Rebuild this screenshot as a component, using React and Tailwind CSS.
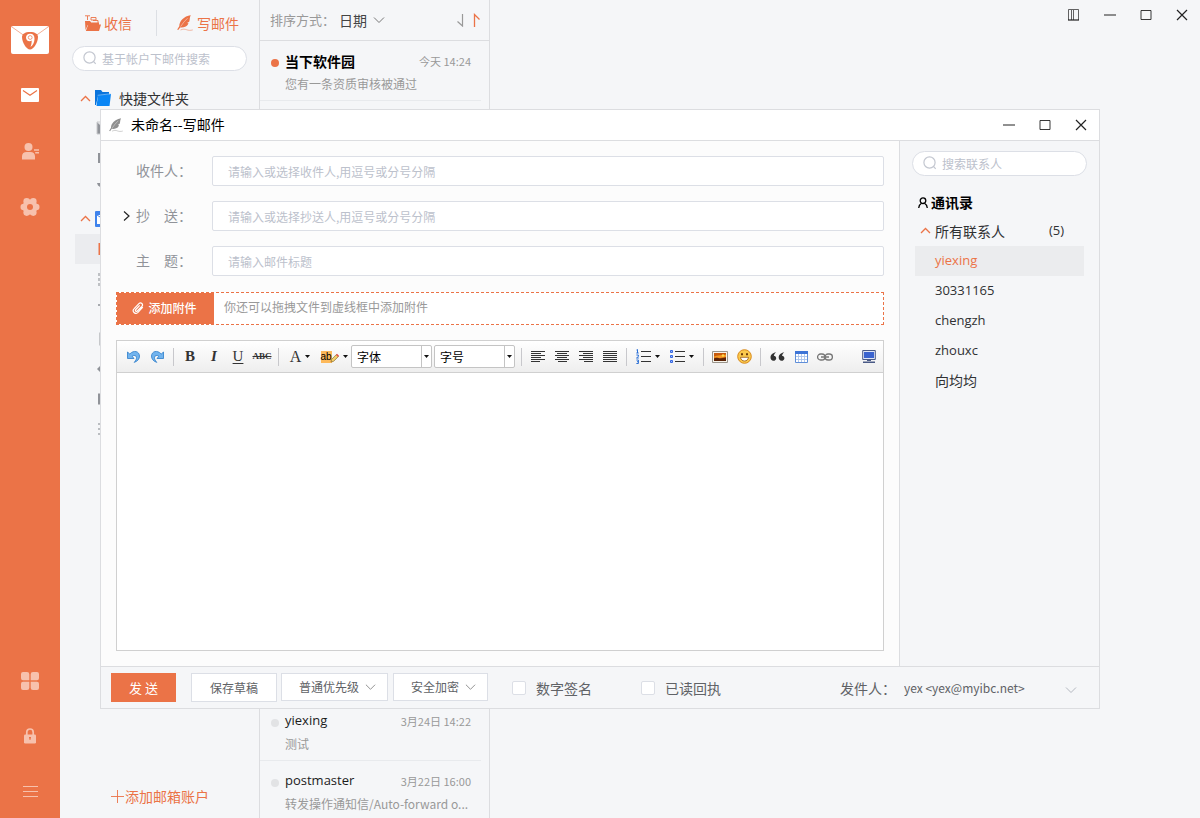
import { useState } from 'react';

const CONTACTS = ['yiexing', '30331165', 'chengzh', 'zhouxc', '向均均'];

const OLDER_MAIL = [
  { from: 'yiexing', time: '3月24日 14:22', text: '测试' },
  { from: 'postmaster', time: '3月22日 16:00', text: '转发操作通知信/Auto-forward o...' },
];

/* ---------- small shared icons ---------- */

function Chevron({ className, d = 'M1 1.5 6 6.5 11 1.5' }) {
  return (
    <svg viewBox="0 0 12 8" className={className} fill="none" stroke="currentColor">
      <path d={d} />
    </svg>
  );
}

function UpChevron() {
  return (
    <svg viewBox="0 0 11 7" className="h-[7px] w-[11px] shrink-0 text-[#eb7347]" fill="none" stroke="currentColor" strokeWidth="1.3">
      <path d="M1 6 5.5 1.5 10 6" />
    </svg>
  );
}

function Caret() {
  return (
    <svg viewBox="0 0 5 3" className="h-[3px] w-[5px] shrink-0" fill="#111">
      <path d="M0 0h5L2.5 3z" />
    </svg>
  );
}

function Feather({ className }) {
  return (
    <svg viewBox="0 0 16 16" className={className} fill="currentColor">
      <path d="M13.8.2C9.500.6 5.200 3.300 3.200 7.200 2.500 8.600 2.200 10 2.300 11.200L.2 14.600l1 .5 2-2.700c3.300.4 6-.5 7.400-2.400l.9-1.800-1.500-.2 2.200-1.300c.5-1.300.5-2.300.6-3.200C12.900 2.300 13.200 1.200 13.800.2z" />
      <path d="M3.600 11.600C5.500 8.500 7.800 5.700 10.600 3.200" stroke="#fff" strokeWidth=".6" fill="none" opacity=".7" />
      <path d="M3.500 15c2.500-1.100 4.300-1 6-.3 1.800.7 3.900.9 6.300.2" fill="none" stroke="currentColor" strokeWidth=".8" opacity=".6" />
    </svg>
  );
}

function SearchIcon() {
  return (
    <svg viewBox="0 0 15 15" className="h-[15px] w-[15px] shrink-0 text-[#c3c7d0]" fill="none" stroke="currentColor" strokeWidth="1.2">
      <circle cx="6.500" cy="6.500" r="5.600" />
      <path d="m10.700 10.700 2 2.200" />
    </svg>
  );
}

function SearchBox({ placeholder }) {
  return (
    <label className="flex h-[25px] items-center gap-1 rounded-full border border-[#dcdfe6] bg-white pl-[10px]">
      <SearchIcon />
      <input
        type="text"
        aria-label={placeholder}
        placeholder={placeholder}
        className="min-w-0 flex-1 bg-transparent text-xs outline-none placeholder:text-[#bcc1cc]"
      />
    </label>
  );
}

function WindowButtons({ layout }) {
  return (
    <div className="flex h-[30px] text-[#222]">
      {layout && (
        <button className="flex w-9 items-center justify-center">
          <svg viewBox="0 0 12 12" className="h-3 w-3" fill="none" stroke="currentColor">
            <path d="M.5 11V.5h10V11M3.500 1v10M5.500 1v10" strokeWidth=".7" />
            <path d="M0 11h11" strokeWidth="1.2" />
          </svg>
        </button>
      )}
      <button className="flex w-9 items-center justify-center">
        <svg viewBox="0 0 12 12" className="h-3 w-3" stroke="currentColor"><path d="M0 6h12" /></svg>
      </button>
      <button className="flex w-9 items-center justify-center">
        <svg viewBox="0 0 12 12" className="h-3 w-3" fill="none" stroke="currentColor"><path d="M1 1.5h10v9H1z" strokeWidth=".9" /></svg>
      </button>
      <button className="flex w-9 items-center justify-center">
        <svg viewBox="0 0 12 12" className="h-3 w-3" stroke="currentColor"><path d="m1 1 10 10M11 1 1 11" strokeWidth="1.2" /></svg>
      </button>
    </div>
  );
}

/* ---------- left rail ---------- */

function Rail() {
  return (
    <nav className="flex w-[60px] shrink-0 flex-col items-center bg-[#eb7347] pt-[26px] pb-[21px] text-[#f7c1ad]">
      <svg viewBox="0 0 38 28" className="h-7 w-[38px]" fill="none">
        <rect width="38" height="28" rx="2" fill="#fff" />
        <path d="M1 1 13 9.500M37 1 25 9.500" stroke="#f0997a" strokeWidth=".8" />
        <path d="M19 6c-5 0-8 2-8 5 0 5.400 4.300 12.500 8 12.500s8-7.100 8-12.500c0-3-3-5-8-5z" fill="#eb7347" />
        <path d="M19.500 21c2.600-1.800 4-5 4-8.300 0-3.300-1.500-5-4.300-5-2.500 0-4.200 1.500-4.200 3.800s1.500 3.700 3.500 3.700c.9 0 1.700-.3 2.200-.8 0 2.200-.3 4.200-1.200 6.600z" fill="#fff" />
        <circle cx="19.200" cy="11.500" r="1.900" fill="#fff" stroke="#eb7347" strokeWidth=".7" />
      </svg>
      <button className="mt-[34px]">
        <svg viewBox="0 0 18 14" className="h-[14px] w-[18px]">
          <rect width="18" height="14" rx="1" fill="#fff" />
          <path d="m2 2.500 7 4.800 7-4.800" fill="none" stroke="#eb7347" strokeWidth="1.2" />
        </svg>
      </button>
      <button className="mt-[41px]">
        <svg viewBox="0 0 18 17" className="h-[17px] w-[18px]" fill="currentColor">
          <circle cx="7.500" cy="4" r="4" />
          <path d="M1 16.500v-3.200C1 10.500 3 9 5.500 9h4C12 9 14 10.500 14 13.300v3.200zM13 6.300h5v1.500h-5zM14.200 9h3.800v1.500h-3.800z" />
        </svg>
      </button>
      <button className="mt-[37px]">
        <svg viewBox="0 0 20 20" className="h-5 w-5">
          <g fill="currentColor">
            <circle cx="10" cy="10" r="7.500" />
            <circle cx="3.800" cy="10" r="3.300" />
            <circle cx="16.200" cy="10" r="3.300" />
            <circle cx="6.700" cy="4.400" r="3.300" />
            <circle cx="13.300" cy="4.400" r="3.300" />
            <circle cx="6.700" cy="15.600" r="3.300" />
            <circle cx="13.300" cy="15.600" r="3.300" />
          </g>
          <circle cx="10" cy="10" r="3" fill="#eb7347" />
        </svg>
      </button>
      <div className="mt-auto flex flex-col items-center">
        <button>
          <svg viewBox="0 0 18 18" className="h-[18px] w-[18px]" fill="currentColor">
            <path d="M2 0h4a2.300 2.300 0 0 1 2.300 2.300v6H2A2 2 0 0 1 0 6.300V2a2 2 0 0 1 2-2zM12 0h4a2 2 0 0 1 2 2v4.300a2 2 0 0 1-2 2H9.700v-6A2.300 2.300 0 0 1 12 0zM2 9.700h6.300v6A2.300 2.300 0 0 1 6 18H2a2 2 0 0 1-2-2v-4.300a2 2 0 0 1 2-2zM9.700 9.700H16a2 2 0 0 1 2 2V16a2 2 0 0 1-2 2h-4a2.300 2.300 0 0 1-2.300-2.300z" />
          </svg>
        </button>
        <button className="mt-[38px]">
          <svg viewBox="0 0 12 16" className="h-4 w-3">
            <path d="M2.800 7V4.200a3.200 3.200 0 0 1 6.400 0V7" fill="none" stroke="currentColor" strokeWidth="1.7" />
            <rect y="6.500" width="12" height="9" rx="1.200" fill="currentColor" />
            <path d="M5 9h2v1.500h-.5V12h-1v-1.500H5z" fill="#eb7347" />
          </svg>
        </button>
        <button className="mt-[41px]">
          <svg viewBox="0 0 15 12" className="h-3 w-[15px]" stroke="currentColor">
            <path d="M0 1.500h15M0 6.500h15M0 11.500h15" />
          </svg>
        </button>
      </div>
    </nav>
  );
}

/* ---------- folder column ---------- */

// glyphs of the folder rows, each on a 16x16 box
const QUICK_ICONS = [
  <path key="all" d="M1 2h14v12H1zM1 2l7 6 7-6" fill="#909399" stroke="#c8cacd" />,
  <path key="unread" d="M2 3h12v10H2z" fill="#909399" />,
  <path key="flag" d="M1 3h14v2l-4 4v4l-4 1V9L2 5.500z" fill="#909399" />,
];

const BOX_ICONS = [
  <path key="inbox" d="M2.500 2h11v12h-11z" fill="#eb7347" />,
  <path key="draft" d="M3 2v3m0 2v3m0 2v3M6 3h8M6 8h8M6 13h8" stroke="#a7aaaf" strokeWidth="1.4" />,
  <path key="sent" d="M2 3h12v2H2zM4 6h9v8H4z" fill="#a7aaaf" />,
  <path key="trash" d="M4 2v12h9V2z" fill="none" stroke="#a7aaaf" strokeWidth="1.2" />,
  <path key="spam" d="m1 8 6-6v12z" fill="#909399" />,
  <path key="virus" d="M2 2.500h12v11H2z" fill="#909399" />,
  <path key="more" d="M2 3h3m-3 5h2m-2 5h3M7 3h7M7 8h7M7 13h7" stroke="#a7aaaf" strokeWidth="1.4" />,
];

function FolderRow({ icon, active }) {
  return (
    <li className={active ? 'ml-[3px] flex h-[30px] items-center bg-[#ebecef] pl-[21px]' : 'flex h-[30px] items-center pl-6'}>
      <svg viewBox="0 0 16 16" className="h-4 w-4" fill="none">{icon}</svg>
    </li>
  );
}

function Folders() {
  return (
    <aside className="flex w-[200px] shrink-0 flex-col border-r border-[#dcdde0]">
      <div className="mt-[10px] flex h-[26px] items-center text-sm text-[#eb7347]">
        <button className="flex h-full w-[97px] items-center gap-[3px] border-r border-[#dcdfe4] pl-6">
          <svg viewBox="0 0 17 17" className="h-[17px] w-[17px]" fill="currentColor">
            <path d="M1 6h5l1.200 1.500H15V10H3.800L1.500 15z" />
            <path d="M4.300 9.500H17L15 16H1.800z" />
            <path d="M1 .8h5M3.500 1v4M7 2.500h5v1.200M7 2.500V5h5V3.500M9 5.500h5V8" fill="none" stroke="currentColor" strokeWidth=".9" />
          </svg>
          收信
        </button>
        <button className="flex h-full flex-1 items-center gap-1 pl-5">
          <Feather className="h-4 w-4" />
          写邮件
        </button>
      </div>
      <div className="mt-[10px] px-3">
        <SearchBox placeholder="基于帐户下邮件搜索" />
      </div>
      <div className="mt-3 pl-3">
        <div className="flex h-[30px] items-center pl-2">
          <UpChevron />
          <svg viewBox="0 0 16 16" className="ml-1 h-4 w-4">
            <path d="M0 0h6l1.500 2H14v4H3L1 15H0z" fill="#0a74dc" />
            <path d="M3 5.500 16 4 14.500 16H1.500z" fill="#0a86f5" />
            <path d="M2.600 5.300 15.500 3.800" stroke="#8cc6fb" strokeWidth=".7" />
          </svg>
          <span className="ml-2 text-sm text-[#303133]">快捷文件夹</span>
        </div>
        <ul>
          {QUICK_ICONS.map((icon, i) => <FolderRow key={i} icon={icon} />)}
        </ul>
        <div className="flex h-[31px] items-center pl-2">
          <UpChevron />
          <svg viewBox="0 0 16 16" className="ml-1 h-4 w-4">
            <rect width="16" height="16" rx="1" fill="#3f83ec" />
            <path d="M2 4h12v9H2z" fill="#fff" />
            <path d="m2 4 6 4 6-4" fill="none" stroke="#3f83ec" />
          </svg>
        </div>
        <ul>
          {BOX_ICONS.map((icon, i) => <FolderRow key={i} icon={icon} active={i === 0} />)}
        </ul>
      </div>
      <button className="mt-auto mb-[10px] flex h-6 items-center gap-px pl-[51px] text-sm text-[#eb7347]">
        <svg viewBox="0 0 13 13" className="h-[13px] w-[13px]" stroke="currentColor"><path d="M0 6.500h13M6.500 0v13" strokeWidth=".9" /></svg>
        添加邮箱账户
      </button>
    </aside>
  );
}

/* ---------- message column ---------- */

function MailItem({ from, time, text, unread }) {
  return (
    <li className="mr-2 h-[60px] shrink-0 border-b border-[#e8eaed] pt-[10px] pr-[10px] pl-[11px]">
      <div className="flex h-5 items-center">
        <span className={unread ? 'mt-[3px] mr-1.5 h-2 w-2 rounded-full bg-[#eb7347]' : 'mt-[3px] mr-1.5 h-2 w-2 rounded-full bg-[#e2e3e5]'} />
        <span className={unread ? 'flex-1 text-sm font-bold text-black' : 'flex-1 font-[Open_Sans,sans-serif] text-[13px] text-[#1c1c1c]'}>{from}</span>
        <time className="text-[11px] text-[#999]">{time}</time>
      </div>
      <p className="mt-[3px] pl-[14px] text-xs leading-5 whitespace-nowrap text-[#999]">{text}</p>
    </li>
  );
}

function MailList() {
  return (
    <section className="flex w-[230px] shrink-0 flex-col overflow-hidden border-r border-[#dcdde0]">
      <header className="flex h-[41px] shrink-0 items-center border-b border-[#dcdde0] pr-2 pl-[10px] text-[13px] text-[#999]">
        排序方式：
        <button className="ml-1 flex items-center gap-1.5 text-sm text-[#444]">
          日期
          <Chevron className="h-2 w-3 text-[#777]" />
        </button>
        <svg viewBox="0 0 24 14" className="ml-auto h-[14px] w-6" fill="none">
          <path d="M5.500 1v12L.5 8.500" stroke="#999" strokeWidth="1.2" />
          <path d="M17.500 14V1.500l5 5" stroke="#eb7347" strokeWidth="1.3" />
        </svg>
      </header>
      {/* the last row runs on below the window edge */}
      <ul className="-mb-[3px] flex min-h-0 flex-1 flex-col">
        <MailItem unread from="当下软件园" time="今天 14:24" text="您有一条资质审核被通过" />
        <li className="flex-1" />
        {OLDER_MAIL.map((m) => <MailItem key={m.from} {...m} />)}
      </ul>
    </section>
  );
}

/* ---------- editor toolbar ---------- */

function Tool({ children, caret }) {
  return (
    <button type="button" className={caret ? 'flex h-6 w-[34px] items-center justify-center gap-1' : 'flex h-6 w-6 items-center justify-center'}>
      {children}
      {caret && <Caret />}
    </button>
  );
}

function Sep() {
  return <span className="mx-1 h-[18px] w-px bg-[#c8c8cc]" />;
}

function Lines({ d }) {
  return (
    <svg viewBox="0 0 14 11" className="h-[11px] w-[14px]" stroke="#333"><path d={d} /></svg>
  );
}

function UndoIcon({ flip }) {
  return (
    <svg viewBox="0 0 13 13" className={flip ? 'h-[13px] w-[13px] -scale-x-100' : 'h-[13px] w-[13px]'}>
      <path d="M.5 2v6.500H7L5.200 6.300C7 4.800 9.200 5.300 9.500 7.300c.2 1.700-.7 3.400-2.300 5.100 3.300-1.100 5.400-3.500 5.300-6.400C12.300 1.300 6.800-.4 2.800 4z" fill="#72b4ee" stroke="#2c7cc9" strokeWidth=".8" />
    </svg>
  );
}

function ToolSelect({ label }) {
  return (
    <div className="relative mr-[2px] h-[23px] w-[81px] rounded-xs border border-[#c4c4c4] bg-white">
      <select aria-label={label} className="block h-full w-full appearance-none bg-transparent pl-[5px] text-xs text-black outline-none">
        <option>{label}</option>
      </select>
      <span className="pointer-events-none absolute inset-y-0 right-0 flex w-[10px] items-center justify-center border-l border-[#c4c4c4]">
        <Caret />
      </span>
    </div>
  );
}

function Toolbar() {
  return (
    <div className="flex h-8 items-center border-b border-[#d0d0d0] bg-linear-to-b from-white to-[#eeeeee] pr-[2px] pl-1 font-[Liberation_Serif,serif] text-[#333]">
      <Tool><UndoIcon /></Tool>
      <Tool><UndoIcon flip /></Tool>
      <Sep />
      <Tool><b className="text-[15px]">B</b></Tool>
      <Tool><b className="text-[15px] italic">I</b></Tool>
      <Tool><span className="text-[15px] underline underline-offset-2">U</span></Tool>
      <Tool><span className="text-[9px] font-bold line-through">ABC</span></Tool>
      <Sep />
      <Tool caret><span className="text-base">A</span></Tool>
      <Tool caret>
        <span className="relative flex h-4 w-[18px] items-center">
          <span className="bg-[#fdb95a] font-[Liberation_Sans,sans-serif] text-[10px] leading-3 text-black">ab</span>
          <svg viewBox="0 0 9 10" className="absolute top-1 right-0 h-[10px] w-[9px]">
            <path d="m1 9 .6-2.600L6.500 1.400l2 2L3.600 8.300z" fill="#f3d06a" stroke="#8a6a2a" strokeWidth=".7" />
            <path d="m6 2 1-1.200 2 2-1 1.200z" fill="#e2504a" />
          </svg>
        </span>
      </Tool>
      <div className="flex font-[Noto_Sans_CJK_SC,sans-serif]">
        <ToolSelect label="字体" />
        <ToolSelect label="字号" />
      </div>
      <Sep />
      <Tool><Lines d="M0 .5h14M0 2.500h10M0 4.500h14M0 6.500h10M0 8.500h14M0 10.500h9" /></Tool>
      <Tool><Lines d="M0 .5h14M2 2.500h10M0 4.500h14M2 6.500h10M0 8.500h14M3 10.500h9" /></Tool>
      <Tool><Lines d="M0 .5h14M4 2.500h10M0 4.500h14M4 6.500h10M0 8.500h14M5 10.500h9" /></Tool>
      <Tool><Lines d="M0 .5h14M0 2.500h14M0 4.500h14M0 6.500h14M0 8.500h14M0 10.500h14" /></Tool>
      <Sep />
      <Tool caret>
        <svg viewBox="0 0 15 15" className="h-[15px] w-[15px]" fill="none">
          <path d="M5 2.500h10M5 7.500h10M5 12.500h10" stroke="#333" />
          <path d="M.5 1 1.500.5V4M.3 4h2.400M.4 6h2v1.500L.5 9h2.300M.4 11h2v3.500h-2M1 12.700h1.400" stroke="#2a6fd6" strokeWidth="1" />
        </svg>
      </Tool>
      <Tool caret>
        <svg viewBox="0 0 15 15" className="h-[15px] w-[15px]" fill="none">
          <path d="M5 2.500h10M5 7.500h10M5 12.500h10" stroke="#333" />
          <path d="M.5 1.500h2v2h-2zM.5 6.500h2v2h-2zM.5 11.500h2v2h-2z" stroke="#3567e0" fill="#9db9ff" />
        </svg>
      </Tool>
      <Sep />
      <Tool>
        <svg viewBox="0 0 16 12" className="h-3 w-4 shrink-0">
          <path d="M.5.5h15v11H.5z" fill="#f7f3ea" stroke="#9a958c" />
          <path d="M2 2h12v8H2z" fill="#c75a0c" />
          <path d="M2 5.500c3-1.500 8-1 12-2V6l-6 1-6-.5z" fill="#f59a23" />
          <path d="M2 7.500c3-1.500 4 0 6 0s4-1 6-1V10H2z" fill="#5a2408" />
          <circle cx="11" cy="4.500" r="1.200" fill="#ffd94d" />
        </svg>
      </Tool>
      <Tool>
        <svg viewBox="0 0 15 15" className="h-[15px] w-[15px]">
          <circle cx="7.500" cy="7.500" r="6.800" fill="#fbc94c" stroke="#d98a1c" />
          <path d="M4 4.300h2v2H4zM9 4.300h2v2H9z" fill="#6b3a08" />
          <path d="M3.500 8.300h8c-.3 2.400-1.800 3.700-4 3.700s-3.700-1.300-4-3.700z" fill="#fff" stroke="#9a5a10" strokeWidth=".8" />
        </svg>
      </Tool>
      <Sep />
      <Tool>
        <svg viewBox="0 0 15 9" className="h-[9px] w-[15px]" fill="#333">
          <path d="M6 .3C2.800.8.5 2.700.5 5.600c0 2 1.200 3.200 2.900 3.200 1.600 0 2.800-1.100 2.800-2.600 0-1.400-1-2.400-2.400-2.500C4.200 2.300 4.900 1.400 6 .3zM14.200.3C11 .8 8.700 2.700 8.700 5.600c0 2 1.200 3.200 2.900 3.200 1.600 0 2.800-1.100 2.800-2.600 0-1.400-1-2.400-2.400-2.500.4-1.400 1.100-2.300 2.200-3.400z" />
        </svg>
      </Tool>
      <Tool>
        <svg viewBox="0 0 13 12" className="h-3 w-[13px]">
          <path d="M.5.5h12v11H.5z" fill="#fff" stroke="#5f8ed8" />
          <path d="M0 0h13v3H0z" fill="#3d74d6" />
          <path d="M1 5.500h11M1 8.500h11M3.500 3v8M6.500 3v8M9.500 3v8" stroke="#a9c3ec" strokeWidth=".9" />
        </svg>
      </Tool>
      <Tool>
        <svg viewBox="0 0 16 8" className="h-2 w-4 shrink-0" fill="none" stroke="#777">
          <rect x=".6" y="1" width="7.400" height="6" rx="3" strokeWidth="1.3" />
          <rect x="8" y="1" width="7.400" height="6" rx="3" strokeWidth="1.3" />
          <path d="M4 4h8" strokeWidth="1.5" />
        </svg>
      </Tool>
      <div className="ml-auto">
        <Tool>
          <svg viewBox="0 0 14 13" className="h-[13px] w-[14px]">
            <path d="M.7.5h12.600v9H.7z" fill="#dfe6f7" stroke="#4a5a86" />
            <path d="M2 2h10v6H2z" fill="#3a63cf" />
            <path d="M5 10h4v1H5zM1 11.500h12V13H1z" fill="#4a5a86" />
          </svg>
        </Tool>
      </div>
    </div>
  );
}

/* ---------- compose window ---------- */

function Field({ id, label, placeholder, expand }) {
  return (
    <div className="flex h-[30px] items-center">
      <span className="flex w-5 justify-center">
        {expand && (
          <svg viewBox="0 0 7 10" className="h-[10px] w-[7px]" fill="none" stroke="#222" strokeWidth="1.2"><path d="m1 .5 5 4.500-5 4.500" /></svg>
        )}
      </span>
      <label htmlFor={id} className="w-[76px] pb-[2px] text-sm whitespace-pre text-[#909399]">{label}</label>
      <input
        id={id}
        type="text"
        placeholder={placeholder}
        className="h-full min-w-0 flex-1 rounded-xs border border-[#dcdfe6] bg-white px-[15px] text-xs outline-none placeholder:text-[#bcc1cc]"
      />
    </div>
  );
}

function FooterSelect({ label, className }) {
  return (
    <div className={`relative h-7 border border-[#dcdfe6] bg-white ${className}`}>
      <select aria-label={label} className="block h-full w-full appearance-none bg-transparent pl-[17px] text-xs text-[#606266] outline-none">
        <option>{label}</option>
      </select>
      <Chevron className="pointer-events-none absolute top-[9px] right-[11px] h-2 w-[11px] text-[#888]" />
    </div>
  );
}

function Tick({ label }) {
  return (
    <label className="flex items-center gap-[10px] text-sm text-[#606266]">
      <input type="checkbox" className="h-[14px] w-[14px] appearance-none rounded-xs border border-[#dcdfe6] bg-white" />
      {label}
    </label>
  );
}

function Compose() {
  const [picked, setPicked] = useState('yiexing');

  return (
    <div className="flex h-[600px] w-10/12 flex-col border border-[#dcdde0] bg-[#fcfcfc]">
      <header className="flex h-[31px] shrink-0 items-center border-b border-[#dcdde0] bg-white pl-2 text-sm text-black">
        <Feather className="h-[14px] w-[14px] text-[#909090]" />
        <h1 className="ml-2 flex-1 pb-[2px]">未命名--写邮件</h1>
        <WindowButtons />
      </header>

      <div className="flex min-h-0 flex-1">
        <form className="flex min-w-0 flex-1 flex-col p-[15px]">
          <div className="flex flex-col gap-[15px]">
            <Field id="to" label="收件人：" placeholder="请输入或选择收件人,用逗号或分号分隔" />
            <Field id="cc" label="抄&#12288;送：" placeholder="请输入或选择抄送人,用逗号或分号分隔" expand />
            <Field id="subject" label="主&#12288;题：" placeholder="请输入邮件标题" />
          </div>

          <div className="mt-4 flex h-[33px] shrink-0 border border-dashed border-[#eb7347] bg-white text-xs">
            <button type="button" className="flex w-[97px] items-center justify-center gap-1 bg-[#eb7347] pr-[2px] pb-[2px] font-medium text-white">
              <svg viewBox="0 0 12 12" className="h-3 w-3" fill="none" stroke="currentColor" strokeWidth="1.2">
                <path d="M10.800 5.200 6 10.300c-1.300 1.300-3 1.200-4 .2s-1-2.700.2-3.900l4.700-5c.9-.9 2.200-.9 3-.1s.8 2-.1 3L5.300 9c-.5.5-1.200.5-1.600.1s-.4-1 .1-1.600l3.900-4.100" />
              </svg>
              添加附件
            </button>
            <p className="pt-[6px] pl-[10px] text-[#999]">你还可以拖拽文件到虚线框中添加附件</p>
          </div>

          <div className="mt-[15px] flex min-h-0 flex-1 flex-col border border-[#d0d0d0] bg-white">
            <Toolbar />
            <textarea aria-label="正文" className="flex-1 resize-none p-2 text-sm outline-none" />
          </div>
        </form>

        <aside className="w-[200px] shrink-0 border-l border-[#dcdde0] bg-[#f5f6f8] pt-[10px]">
          <div className="px-3">
            <SearchBox placeholder="搜索联系人" />
          </div>
          <h2 className="mt-[11px] flex h-[30px] items-center gap-[3px] pl-[18px] text-sm font-bold text-black">
            <svg viewBox="0 0 10 11" className="h-[11px] w-[10px]" fill="none" stroke="currentColor" strokeWidth="1.3">
              <circle cx="5" cy="3.700" r="2.800" />
              <path d="M.7 11c.2-2.500 1.300-4 2.800-4.800M9.300 11C9.100 8.500 8 7 6.500 6.200" />
            </svg>
            通讯录
          </h2>
          <div className="flex h-[27px] items-center gap-1 pr-[35px] pl-5 text-sm text-[#303133]">
            <UpChevron />
            <span className="flex-1">所有联系人</span>
            <span className="font-[Open_Sans,sans-serif] text-[13px]">(5)</span>
          </div>
          <ul className="mx-[15px] mt-[2px]">
            {CONTACTS.map((name) => (
              <li key={name}>
                <button
                  onClick={() => setPicked(name)}
                  className={`flex h-[30px] w-full items-center pl-5 font-[Open_Sans,Noto_Sans_CJK_SC,sans-serif] ${
                    /^\w+$/.test(name) ? 'text-[13px]' : 'text-sm'
                  } ${picked === name ? 'bg-[#ebecee] text-[#eb7347]' : 'text-[#303133]'}`}
                >
                  {name}
                </button>
              </li>
            ))}
          </ul>
        </aside>
      </div>

      <footer className="flex h-[42px] shrink-0 items-start border-t border-[#dcdde0] bg-[#f5f6f8] px-[10px] pt-[6px]">
        <button className="h-[29px] w-[65px] bg-[#eb7347] text-[13px] text-white">发 送</button>
        <button className="ml-[15px] h-[29px] w-[86px] border border-[#dcdfe6] bg-white text-xs text-[#606266]">保存草稿</button>
        <FooterSelect label="普通优先级" className="ml-1 w-[107px]" />
        <FooterSelect label="安全加密" className="ml-[5px] w-[95px]" />
        <div className="ml-6 flex h-[30px] flex-1 items-center">
          <Tick label="数字签名" />
          <span className="w-[49px]" />
          <Tick label="已读回执" />
          <label htmlFor="sender" className="ml-auto text-sm text-[#606266]">发件人：</label>
          <div className="relative ml-2 w-[185px]">
            <select id="sender" className="block w-full appearance-none bg-transparent text-xs text-[#606266] outline-none">
              <option>yex &lt;yex@myibc.net&gt;</option>
            </select>
            <Chevron className="pointer-events-none absolute top-[6px] right-3 h-2 w-3 text-[#b4b8c0]" />
          </div>
        </div>
      </footer>
    </div>
  );
}

export default function App() {
  return (
    <div className="relative flex h-screen overflow-hidden bg-[#f5f6f8] font-[Noto_Sans_CJK_SC,sans-serif]">
      <Rail />
      <Folders />
      <MailList />
      <main className="flex flex-1 items-start justify-end">
        <WindowButtons layout />
      </main>

      {/* compose window floats over the mail client */}
      <div className="absolute inset-0 flex items-center justify-center">
        <Compose />
      </div>
    </div>
  );
}
